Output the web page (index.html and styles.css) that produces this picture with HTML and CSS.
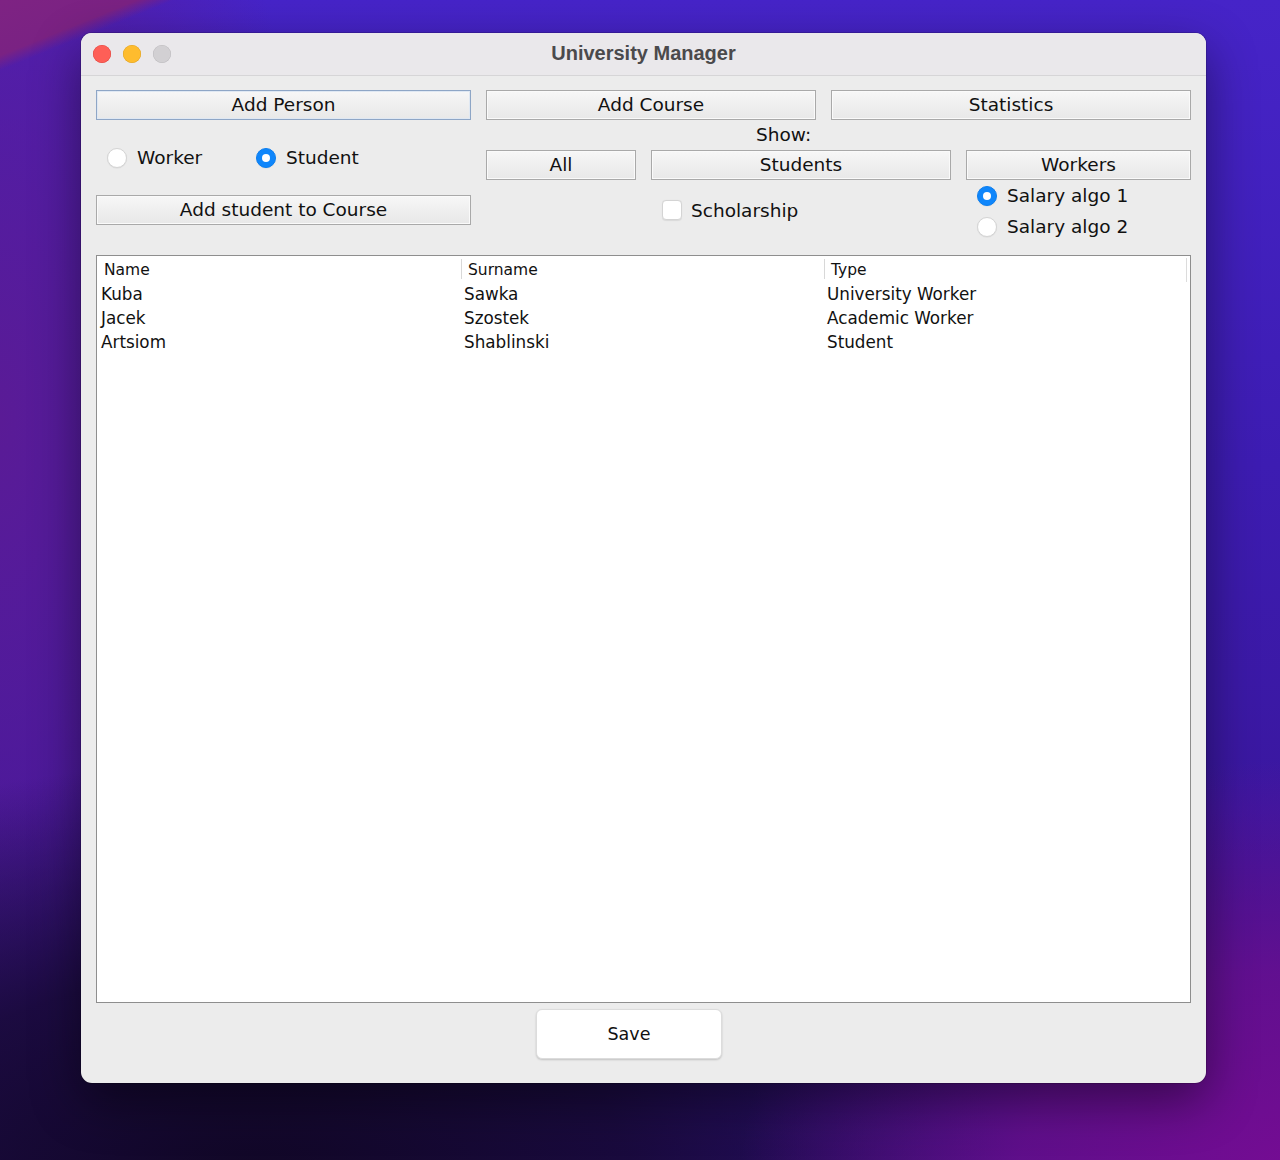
FILE: index.html
```html
<!DOCTYPE html>
<html>
<head>
<meta charset="utf-8">
<title>University Manager</title>
<link rel="stylesheet" href="styles.css">
</head>
<body>
<div class="window">
  <div class="titlebar">
    <div class="lights">
      <span class="light red"></span>
      <span class="light yellow"></span>
      <span class="light grey"></span>
    </div>
    <div class="title">University Manager</div>
  </div>
  <div class="content">
    <div class="top">
      <div class="left-panel">
        <button class="btn focused">Add Person</button>
        <div class="radio-row">
          <label class="opt opt-worker"><span class="radio"></span>Worker</label>
          <label class="opt"><span class="radio checked"></span>Student</label>
        </div>
        <button class="btn">Add student to Course</button>
      </div>
      <div class="right-panel">
        <div class="row1">
          <button class="btn w330">Add Course</button>
          <button class="btn w360">Statistics</button>
        </div>
        <div class="show-label">Show:</div>
        <div class="grid3">
          <button class="btn">All</button>
          <button class="btn">Students</button>
          <button class="btn">Workers</button>
        </div>
        <div class="grid3 row3">
          <div></div>
          <label class="opt check-cell"><span class="checkbox"></span>Scholarship</label>
          <div class="salary">
            <label class="opt salary-opt"><span class="radio checked"></span>Salary algo 1</label>
            <label class="opt salary-opt"><span class="radio"></span>Salary algo 2</label>
          </div>
        </div>
      </div>
    </div>
    <div class="table">
      <div class="thead">
        <div class="th first">Name</div>
        <div class="th">Surname</div>
        <div class="th">Type</div>
      </div>
      <div class="tr"><div class="td c1">Kuba</div><div class="td c2">Sawka</div><div class="td c3">University Worker</div></div>
      <div class="tr"><div class="td c1">Jacek</div><div class="td c2">Szostek</div><div class="td c3">Academic Worker</div></div>
      <div class="tr"><div class="td c1">Artsiom</div><div class="td c2">Shablinski</div><div class="td c3">Student</div></div>
    </div>
    <div class="footer">
      <button class="save">Save</button>
    </div>
  </div>
</div>
</body>
</html>
```
FILE: styles.css
```css
* { box-sizing: border-box; }
html, body { margin: 0; }
body {
  width: 1280px;
  height: 1160px;
  overflow: hidden;
  padding: 33px 0 0 81px;
  font-family: "DejaVu Sans", sans-serif;
  color: #111;
  background:
    linear-gradient(158deg, #7e2383 0%, #7a2283 3.3%, rgba(122,34,131,0) 4.2%),
    radial-gradient(ellipse 560px 420px at 1300px 1180px, #760c94 0%, rgba(112,14,146,0.75) 50%, rgba(112,14,146,0) 100%),
    radial-gradient(ellipse 760px 420px at 250px 1180px, #110726 0%, rgba(22,9,52,0.85) 50%, rgba(22,9,52,0) 100%),
    radial-gradient(ellipse 320px 760px at 0px 420px, #5a1b96 0%, rgba(90,27,150,0.6) 50%, rgba(90,27,150,0) 100%),
    linear-gradient(180deg, #4624c8 0%, #3d1cb2 40%, #3a179f 70%, #2c1072 100%);
}
.window {
  width: 1125px;
  height: 1050px;
  border-radius: 11px;
  background: #ececec;
  overflow: hidden;
  box-shadow: 0 18px 50px rgba(0,0,0,0.45), 0 0 0 1px rgba(0,0,0,0.15);
  display: flex;
  flex-direction: column;
}
.titlebar {
  height: 43px;
  background: #eae8eb;
  border-bottom: 1px solid #d6d5d7;
  display: flex;
  align-items: center;
  position: relative;
}
.lights {
  display: flex;
  gap: 12px;
  padding-left: 12px;
  position: absolute;
  left: 0;
  top: 12px;
}
.light {
  width: 18px;
  height: 18px;
  border-radius: 50%;
  display: block;
}
.light.red { background: #fe5f57; box-shadow: inset 0 0 0 0.5px #e0443e; }
.light.yellow { background: #febc2e; box-shadow: inset 0 0 0 0.5px #dea123; }
.light.grey { background: #d2d0d3; box-shadow: inset 0 0 0 0.5px #bcbabd; }
.title {
  flex: 1;
  text-align: center;
  font-family: "Liberation Sans", Arial, sans-serif;
  font-weight: bold;
  font-size: 20px;
  color: #4b4a4c;
  padding-left: 0;
  margin-top: -2px;
}
.content {
  padding: 14px 15px 0 15px;
  flex: 1;
  display: flex;
  flex-direction: column;
}
.top {
  display: flex;
  gap: 15px;
  height: 152px;
  align-items: flex-start;
}
.left-panel {
  width: 375px;
  display: flex;
  flex-direction: column;
}
.right-panel {
  width: 705px;
  display: flex;
  flex-direction: column;
}
.btn {
  height: 30px;
  width: 100%;
  font-family: "DejaVu Sans", sans-serif;
  font-size: 18.5px;
  color: #111;
  background: linear-gradient(180deg, #f7f7f7 0%, #efefef 50%, #e8e8e8 100%);
  border: 1px solid #a9a9a9;
  box-shadow: inset 0 0 0 1px #fafafa;
  border-radius: 0;
  padding: 0;
  margin: 0;
  line-height: 28px;
}
.btn.focused {
  border-color: #8ea6c6;
  box-shadow: inset 0 0 0 1px #dfe8f3;
}
.radio-row {
  height: 75px;
  display: flex;
  align-items: center;
  padding-left: 11px;
}
.opt {
  display: flex;
  align-items: center;
  font-size: 18.5px;
  color: #111;
}
.opt-worker { width: 149px; }
.radio {
  width: 20px;
  height: 20px;
  border-radius: 50%;
  background: #fff;
  border: 1px solid #d4d4d4;
  box-shadow: 0 0.5px 1px rgba(0,0,0,0.08);
  margin-right: 10px;
  flex: none;
  position: relative;
}
.radio.checked {
  background: #0f86fb;
  border-color: #0a7ef0;
}
.radio.checked::after {
  content: "";
  position: absolute;
  width: 8px;
  height: 8px;
  border-radius: 50%;
  background: #fff;
  left: 50%;
  top: 50%;
  transform: translate(-50%, -50%);
}
.checkbox {
  width: 20px;
  height: 20px;
  border-radius: 4px;
  background: #fff;
  border: 1px solid #d4d4d4;
  box-shadow: 0 0.5px 1px rgba(0,0,0,0.08);
  margin-right: 9px;
  flex: none;
}
.row1 {
  display: flex;
  gap: 15px;
}
.w330 { width: 330px; }
.w360 { width: 360px; }
.show-label {
  height: 30px;
  line-height: 30px;
  font-size: 18.5px;
  padding-left: 270px;
}
.grid3 {
  display: grid;
  grid-template-columns: 150px 300px 225px;
  column-gap: 15px;
}
.row3 {
  height: 62px;
}
.check-cell {
  align-self: start;
  margin-top: 19px;
  padding-left: 11px;
  height: 22px;
}
.salary {
  display: flex;
  flex-direction: column;
  padding-left: 11px;
}
.salary-opt {
  height: 31px;
}
.table {
  margin-top: 13px;
  height: 748px;
  background: #fff;
  border: 1px solid #8e8e8e;
  padding-right: 3px;
}
.thead {
  display: grid;
  grid-template-columns: 364px 363px 363px;
  height: 24px;
  font-size: 15.5px;
  border-right: 1px solid #dcdcdc;
  margin-top: 2px;
}
.th {
  line-height: 22px;
  padding-left: 6px;
  border-left: 1px solid #d8d8d8;
  height: 20px;
  margin-top: 1px;
}
.th.first {
  border-left: none;
  padding-left: 7px;
}
.tr {
  display: grid;
  grid-template-columns: 364px 363px 363px;
  height: 24px;
  line-height: 24px;
  font-size: 16.8px;
}
.td.c1 { padding-left: 4px; }
.td.c2 { padding-left: 3px; }
.td.c3 { padding-left: 3px; }
.footer {
  padding-top: 6px;
  padding-left: 440px;
}
.save {
  width: 186px;
  height: 50px;
  background: #fff;
  border: 1px solid #dcdcdc;
  border-radius: 6px;
  box-shadow: 0 1px 2px rgba(0,0,0,0.18);
  font-family: "DejaVu Sans", sans-serif;
  font-size: 17.5px;
  color: #111;
  padding: 0;
}
```
